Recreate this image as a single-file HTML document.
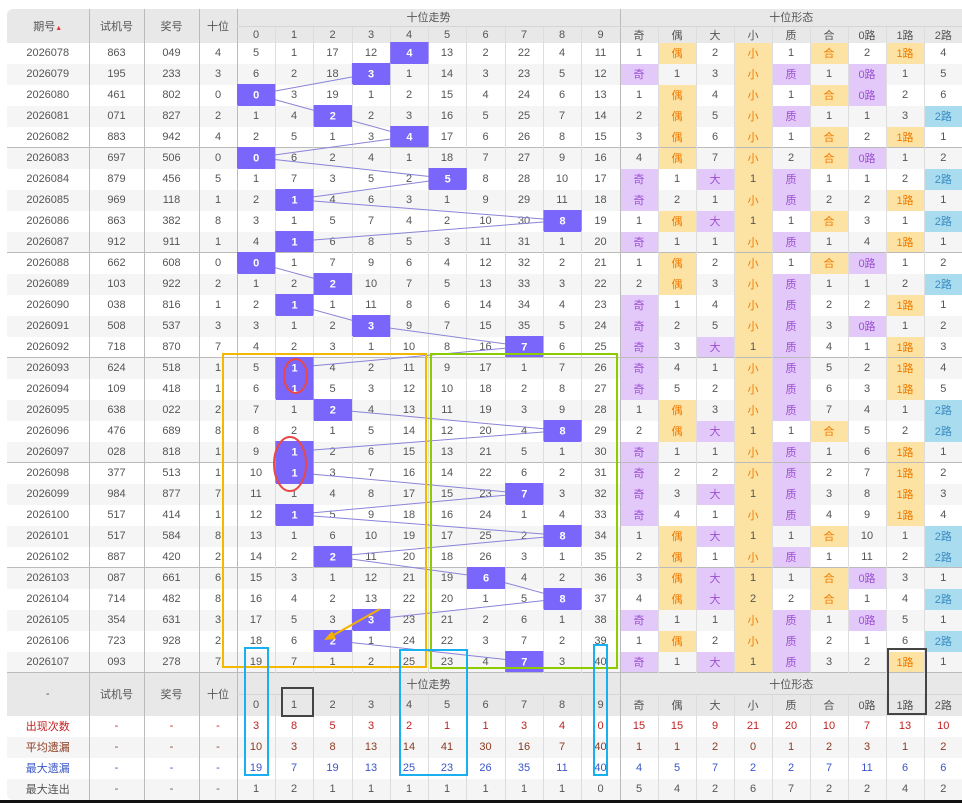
<!DOCTYPE html>
<html><head><meta charset="utf-8"><style>
*{margin:0;padding:0;box-sizing:border-box}
body{width:962px;height:803px;background:#fff;position:relative;overflow:hidden;font-family:"Liberation Sans","Noto Sans CJK SC",sans-serif;font-size:11px;color:#555}
.bar{position:absolute;left:0;top:800px;width:962px;height:3px;background:#111}
table{position:absolute;left:7px;top:9px;width:955px;border-collapse:collapse;table-layout:fixed;background:#fff;border-radius:6px 0 0 6px;overflow:hidden}
td,th{text-align:center;border-left:1px solid #ddd;font-weight:normal;white-space:nowrap;overflow:hidden;padding:0}
th{background:#e8e8e8;color:#555}
tr.d td{height:21px}
tr.g td{background:#f5f5f5}
tr.sep td{box-shadow:inset 0 -1px 0 #bbb}
.L{border-left:1px solid #bbb}
.h{background:#7a66fa!important;color:#fff}
.p{background:#e3c8fa!important;color:#9b50d0}
.y{background:#fde3a3!important;color:#f07a00}
.b{background:#a9dcef!important;color:#3b8cc2}
.ys{background:#fde3a3!important}
.r{color:#c02222}.br{color:#8b3a20}.bl{color:#3a55c8}
tr.s td{height:21px}
</style></head><body>
<table>
<colgroup><col style="width:82px"><col style="width:55px"><col style="width:55px"><col style="width:38px">
<col style="width:38px"><col style="width:38px"><col style="width:39px"><col style="width:38px"><col style="width:38px"><col style="width:38px"><col style="width:39px"><col style="width:38px"><col style="width:38px"><col style="width:39px">
<col style="width:38px"><col style="width:38px"><col style="width:38px"><col style="width:38px"><col style="width:38px"><col style="width:38px"><col style="width:38px"><col style="width:38px"><col style="width:38px"></colgroup>
<tr style="height:17px"><th rowspan="2" style="border-left:none">期号<span style="font-size:7px;color:#e33">▲</span></th><th rowspan="2" class="L">试机号</th><th rowspan="2" class="L">奖号</th><th rowspan="2" class="L">十位</th><th colspan="10" class="L" style="border-bottom:1px solid #d5d5d5">十位走势</th><th colspan="9" class="L" style="border-bottom:1px solid #d5d5d5">十位形态</th></tr>
<tr style="height:16px"><th class="L">0</th><th>1</th><th>2</th><th>3</th><th>4</th><th>5</th><th>6</th><th>7</th><th>8</th><th>9</th><th class="L">奇</th><th>偶</th><th>大</th><th>小</th><th>质</th><th>合</th><th>0路</th><th>1路</th><th>2路</th></tr>
<tr class="d"><td style="border:none">2026078</td><td class="L">863</td><td class="L">049</td><td class="L">4</td><td class="L">5</td><td>1</td><td>17</td><td>12</td><td class="h"></td><td>13</td><td>2</td><td>22</td><td>4</td><td>11</td><td class="L">1</td><td class="y">偶</td><td>2</td><td class="y">小</td><td>1</td><td class="y">合</td><td>2</td><td class="y">1路</td><td>4</td></tr>
<tr class="d g"><td style="border:none">2026079</td><td class="L">195</td><td class="L">233</td><td class="L">3</td><td class="L">6</td><td>2</td><td>18</td><td class="h"></td><td>1</td><td>14</td><td>3</td><td>23</td><td>5</td><td>12</td><td class="L p">奇</td><td>1</td><td>3</td><td class="y">小</td><td class="p">质</td><td>1</td><td class="p">0路</td><td>1</td><td>5</td></tr>
<tr class="d"><td style="border:none">2026080</td><td class="L">461</td><td class="L">802</td><td class="L">0</td><td class="L h"></td><td>3</td><td>19</td><td>1</td><td>2</td><td>15</td><td>4</td><td>24</td><td>6</td><td>13</td><td class="L">1</td><td class="y">偶</td><td>4</td><td class="y">小</td><td>1</td><td class="y">合</td><td class="p">0路</td><td>2</td><td>6</td></tr>
<tr class="d g"><td style="border:none">2026081</td><td class="L">071</td><td class="L">827</td><td class="L">2</td><td class="L">1</td><td>4</td><td class="h"></td><td>2</td><td>3</td><td>16</td><td>5</td><td>25</td><td>7</td><td>14</td><td class="L">2</td><td class="y">偶</td><td>5</td><td class="y">小</td><td class="p">质</td><td>1</td><td>1</td><td>3</td><td class="b">2路</td></tr>
<tr class="d sep"><td style="border-left:none">2026082</td><td class="L">883</td><td class="L">942</td><td class="L">4</td><td class="L">2</td><td>5</td><td>1</td><td>3</td><td class="h"></td><td>17</td><td>6</td><td>26</td><td>8</td><td>15</td><td class="L">3</td><td class="y">偶</td><td>6</td><td class="y">小</td><td>1</td><td class="y">合</td><td>2</td><td class="y">1路</td><td>1</td></tr>
<tr class="d g"><td style="border:none">2026083</td><td class="L">697</td><td class="L">506</td><td class="L">0</td><td class="L h"></td><td>6</td><td>2</td><td>4</td><td>1</td><td>18</td><td>7</td><td>27</td><td>9</td><td>16</td><td class="L">4</td><td class="y">偶</td><td>7</td><td class="y">小</td><td>2</td><td class="y">合</td><td class="p">0路</td><td>1</td><td>2</td></tr>
<tr class="d"><td style="border:none">2026084</td><td class="L">879</td><td class="L">456</td><td class="L">5</td><td class="L">1</td><td>7</td><td>3</td><td>5</td><td>2</td><td class="h"></td><td>8</td><td>28</td><td>10</td><td>17</td><td class="L p">奇</td><td>1</td><td class="p">大</td><td class="ys">1</td><td class="p">质</td><td>1</td><td>1</td><td>2</td><td class="b">2路</td></tr>
<tr class="d g"><td style="border:none">2026085</td><td class="L">969</td><td class="L">118</td><td class="L">1</td><td class="L">2</td><td class="h"></td><td>4</td><td>6</td><td>3</td><td>1</td><td>9</td><td>29</td><td>11</td><td>18</td><td class="L p">奇</td><td>2</td><td>1</td><td class="y">小</td><td class="p">质</td><td>2</td><td>2</td><td class="y">1路</td><td>1</td></tr>
<tr class="d"><td style="border:none">2026086</td><td class="L">863</td><td class="L">382</td><td class="L">8</td><td class="L">3</td><td>1</td><td>5</td><td>7</td><td>4</td><td>2</td><td>10</td><td>30</td><td class="h"></td><td>19</td><td class="L">1</td><td class="y">偶</td><td class="p">大</td><td class="ys">1</td><td>1</td><td class="y">合</td><td>3</td><td>1</td><td class="b">2路</td></tr>
<tr class="d g sep"><td style="border-left:none">2026087</td><td class="L">912</td><td class="L">911</td><td class="L">1</td><td class="L">4</td><td class="h"></td><td>6</td><td>8</td><td>5</td><td>3</td><td>11</td><td>31</td><td>1</td><td>20</td><td class="L p">奇</td><td>1</td><td>1</td><td class="y">小</td><td class="p">质</td><td>1</td><td>4</td><td class="y">1路</td><td>1</td></tr>
<tr class="d"><td style="border:none">2026088</td><td class="L">662</td><td class="L">608</td><td class="L">0</td><td class="L h"></td><td>1</td><td>7</td><td>9</td><td>6</td><td>4</td><td>12</td><td>32</td><td>2</td><td>21</td><td class="L">1</td><td class="y">偶</td><td>2</td><td class="y">小</td><td>1</td><td class="y">合</td><td class="p">0路</td><td>1</td><td>2</td></tr>
<tr class="d g"><td style="border:none">2026089</td><td class="L">103</td><td class="L">922</td><td class="L">2</td><td class="L">1</td><td>2</td><td class="h"></td><td>10</td><td>7</td><td>5</td><td>13</td><td>33</td><td>3</td><td>22</td><td class="L">2</td><td class="y">偶</td><td>3</td><td class="y">小</td><td class="p">质</td><td>1</td><td>1</td><td>2</td><td class="b">2路</td></tr>
<tr class="d"><td style="border:none">2026090</td><td class="L">038</td><td class="L">816</td><td class="L">1</td><td class="L">2</td><td class="h"></td><td>1</td><td>11</td><td>8</td><td>6</td><td>14</td><td>34</td><td>4</td><td>23</td><td class="L p">奇</td><td>1</td><td>4</td><td class="y">小</td><td class="p">质</td><td>2</td><td>2</td><td class="y">1路</td><td>1</td></tr>
<tr class="d g"><td style="border:none">2026091</td><td class="L">508</td><td class="L">537</td><td class="L">3</td><td class="L">3</td><td>1</td><td>2</td><td class="h"></td><td>9</td><td>7</td><td>15</td><td>35</td><td>5</td><td>24</td><td class="L p">奇</td><td>2</td><td>5</td><td class="y">小</td><td class="p">质</td><td>3</td><td class="p">0路</td><td>1</td><td>2</td></tr>
<tr class="d sep"><td style="border-left:none">2026092</td><td class="L">718</td><td class="L">870</td><td class="L">7</td><td class="L">4</td><td>2</td><td>3</td><td>1</td><td>10</td><td>8</td><td>16</td><td class="h"></td><td>6</td><td>25</td><td class="L p">奇</td><td>3</td><td class="p">大</td><td class="ys">1</td><td class="p">质</td><td>4</td><td>1</td><td class="y">1路</td><td>3</td></tr>
<tr class="d g"><td style="border:none">2026093</td><td class="L">624</td><td class="L">518</td><td class="L">1</td><td class="L">5</td><td class="h"></td><td>4</td><td>2</td><td>11</td><td>9</td><td>17</td><td>1</td><td>7</td><td>26</td><td class="L p">奇</td><td>4</td><td>1</td><td class="y">小</td><td class="p">质</td><td>5</td><td>2</td><td class="y">1路</td><td>4</td></tr>
<tr class="d"><td style="border:none">2026094</td><td class="L">109</td><td class="L">418</td><td class="L">1</td><td class="L">6</td><td class="h"></td><td>5</td><td>3</td><td>12</td><td>10</td><td>18</td><td>2</td><td>8</td><td>27</td><td class="L p">奇</td><td>5</td><td>2</td><td class="y">小</td><td class="p">质</td><td>6</td><td>3</td><td class="y">1路</td><td>5</td></tr>
<tr class="d g"><td style="border:none">2026095</td><td class="L">638</td><td class="L">022</td><td class="L">2</td><td class="L">7</td><td>1</td><td class="h"></td><td>4</td><td>13</td><td>11</td><td>19</td><td>3</td><td>9</td><td>28</td><td class="L">1</td><td class="y">偶</td><td>3</td><td class="y">小</td><td class="p">质</td><td>7</td><td>4</td><td>1</td><td class="b">2路</td></tr>
<tr class="d"><td style="border:none">2026096</td><td class="L">476</td><td class="L">689</td><td class="L">8</td><td class="L">8</td><td>2</td><td>1</td><td>5</td><td>14</td><td>12</td><td>20</td><td>4</td><td class="h"></td><td>29</td><td class="L">2</td><td class="y">偶</td><td class="p">大</td><td class="ys">1</td><td>1</td><td class="y">合</td><td>5</td><td>2</td><td class="b">2路</td></tr>
<tr class="d g sep"><td style="border-left:none">2026097</td><td class="L">028</td><td class="L">818</td><td class="L">1</td><td class="L">9</td><td class="h"></td><td>2</td><td>6</td><td>15</td><td>13</td><td>21</td><td>5</td><td>1</td><td>30</td><td class="L p">奇</td><td>1</td><td>1</td><td class="y">小</td><td class="p">质</td><td>1</td><td>6</td><td class="y">1路</td><td>1</td></tr>
<tr class="d"><td style="border:none">2026098</td><td class="L">377</td><td class="L">513</td><td class="L">1</td><td class="L">10</td><td class="h"></td><td>3</td><td>7</td><td>16</td><td>14</td><td>22</td><td>6</td><td>2</td><td>31</td><td class="L p">奇</td><td>2</td><td>2</td><td class="y">小</td><td class="p">质</td><td>2</td><td>7</td><td class="y">1路</td><td>2</td></tr>
<tr class="d g"><td style="border:none">2026099</td><td class="L">984</td><td class="L">877</td><td class="L">7</td><td class="L">11</td><td>1</td><td>4</td><td>8</td><td>17</td><td>15</td><td>23</td><td class="h"></td><td>3</td><td>32</td><td class="L p">奇</td><td>3</td><td class="p">大</td><td class="ys">1</td><td class="p">质</td><td>3</td><td>8</td><td class="y">1路</td><td>3</td></tr>
<tr class="d"><td style="border:none">2026100</td><td class="L">517</td><td class="L">414</td><td class="L">1</td><td class="L">12</td><td class="h"></td><td>5</td><td>9</td><td>18</td><td>16</td><td>24</td><td>1</td><td>4</td><td>33</td><td class="L p">奇</td><td>4</td><td>1</td><td class="y">小</td><td class="p">质</td><td>4</td><td>9</td><td class="y">1路</td><td>4</td></tr>
<tr class="d g"><td style="border:none">2026101</td><td class="L">517</td><td class="L">584</td><td class="L">8</td><td class="L">13</td><td>1</td><td>6</td><td>10</td><td>19</td><td>17</td><td>25</td><td>2</td><td class="h"></td><td>34</td><td class="L">1</td><td class="y">偶</td><td class="p">大</td><td class="ys">1</td><td>1</td><td class="y">合</td><td>10</td><td>1</td><td class="b">2路</td></tr>
<tr class="d sep"><td style="border-left:none">2026102</td><td class="L">887</td><td class="L">420</td><td class="L">2</td><td class="L">14</td><td>2</td><td class="h"></td><td>11</td><td>20</td><td>18</td><td>26</td><td>3</td><td>1</td><td>35</td><td class="L">2</td><td class="y">偶</td><td>1</td><td class="y">小</td><td class="p">质</td><td>1</td><td>11</td><td>2</td><td class="b">2路</td></tr>
<tr class="d g"><td style="border:none">2026103</td><td class="L">087</td><td class="L">661</td><td class="L">6</td><td class="L">15</td><td>3</td><td>1</td><td>12</td><td>21</td><td>19</td><td class="h"></td><td>4</td><td>2</td><td>36</td><td class="L">3</td><td class="y">偶</td><td class="p">大</td><td class="ys">1</td><td>1</td><td class="y">合</td><td class="p">0路</td><td>3</td><td>1</td></tr>
<tr class="d"><td style="border:none">2026104</td><td class="L">714</td><td class="L">482</td><td class="L">8</td><td class="L">16</td><td>4</td><td>2</td><td>13</td><td>22</td><td>20</td><td>1</td><td>5</td><td class="h"></td><td>37</td><td class="L">4</td><td class="y">偶</td><td class="p">大</td><td class="ys">2</td><td>2</td><td class="y">合</td><td>1</td><td>4</td><td class="b">2路</td></tr>
<tr class="d g"><td style="border:none">2026105</td><td class="L">354</td><td class="L">631</td><td class="L">3</td><td class="L">17</td><td>5</td><td>3</td><td class="h"></td><td>23</td><td>21</td><td>2</td><td>6</td><td>1</td><td>38</td><td class="L p">奇</td><td>1</td><td>1</td><td class="y">小</td><td class="p">质</td><td>1</td><td class="p">0路</td><td>5</td><td>1</td></tr>
<tr class="d"><td style="border:none">2026106</td><td class="L">723</td><td class="L">928</td><td class="L">2</td><td class="L">18</td><td>6</td><td class="h"></td><td>1</td><td>24</td><td>22</td><td>3</td><td>7</td><td>2</td><td>39</td><td class="L">1</td><td class="y">偶</td><td>2</td><td class="y">小</td><td class="p">质</td><td>2</td><td>1</td><td>6</td><td class="b">2路</td></tr>
<tr class="d g"><td style="border:none">2026107</td><td class="L">093</td><td class="L">278</td><td class="L">7</td><td class="L">19</td><td>7</td><td>1</td><td>2</td><td>25</td><td>23</td><td>4</td><td class="h"></td><td>3</td><td>40</td><td class="L p">奇</td><td>1</td><td class="p">大</td><td class="ys">1</td><td class="p">质</td><td>3</td><td>2</td><td class="y">1路</td><td>1</td></tr>
<tr style="height:22px"><th rowspan="2" style="border-left:none;border-top:1px solid #bbb">-</th><th rowspan="2" class="L" style="border-top:1px solid #bbb">试机号</th><th rowspan="2" class="L" style="border-top:1px solid #bbb">奖号</th><th rowspan="2" class="L" style="border-top:1px solid #bbb">十位</th><th colspan="10" class="L" style="border-top:1px solid #bbb;border-bottom:1px solid #d5d5d5">十位走势</th><th colspan="9" class="L" style="border-top:1px solid #bbb;border-bottom:1px solid #d5d5d5">十位形态</th></tr>
<tr style="height:21px"><th class="L">0</th><th>1</th><th>2</th><th>3</th><th>4</th><th>5</th><th>6</th><th>7</th><th>8</th><th>9</th><th class="L">奇</th><th>偶</th><th>大</th><th>小</th><th>质</th><th>合</th><th>0路</th><th>1路</th><th>2路</th></tr>
<tr class="s r"><td style="border:none">出现次数</td><td class="L">-</td><td class="L">-</td><td class="L">-</td><td class="L">3</td><td>8</td><td>5</td><td>3</td><td>2</td><td>1</td><td>1</td><td>3</td><td>4</td><td>0</td><td class="L">15</td><td>15</td><td>9</td><td>21</td><td>20</td><td>10</td><td>7</td><td>13</td><td>10</td></tr>
<tr class="s g br"><td style="border:none">平均遗漏</td><td class="L">-</td><td class="L">-</td><td class="L">-</td><td class="L">10</td><td>3</td><td>8</td><td>13</td><td>14</td><td>41</td><td>30</td><td>16</td><td>7</td><td>40</td><td class="L">1</td><td>1</td><td>2</td><td>0</td><td>1</td><td>2</td><td>3</td><td>1</td><td>2</td></tr>
<tr class="s bl"><td style="border:none">最大遗漏</td><td class="L">-</td><td class="L">-</td><td class="L">-</td><td class="L">19</td><td>7</td><td>19</td><td>13</td><td>25</td><td>23</td><td>26</td><td>35</td><td>11</td><td>40</td><td class="L">4</td><td>5</td><td>7</td><td>2</td><td>2</td><td>7</td><td>11</td><td>6</td><td>6</td></tr>
<tr class="s g"><td style="border:none">最大连出</td><td class="L">-</td><td class="L">-</td><td class="L">-</td><td class="L">1</td><td>2</td><td>1</td><td>1</td><td>1</td><td>1</td><td>1</td><td>1</td><td>1</td><td>0</td><td class="L">5</td><td>4</td><td>2</td><td>6</td><td>7</td><td>2</td><td>2</td><td>4</td><td>2</td></tr>
</table>
<div class="bar"></div>
<svg width="962" height="803" style="position:absolute;left:0;top:0" font-family="Liberation Sans, sans-serif" font-size="11">
<polyline fill="none" stroke="#8a84d8" stroke-width="1" points="409.4,52.5 371.1,73.5 256.2,94.5 332.8,115.5 409.4,136.5 256.2,157.5 447.7,178.5 294.5,199.5 562.6,220.5 294.5,241.5 256.2,262.5 332.8,283.5 294.5,304.5 371.1,325.5 524.3,346.5 294.5,367.5 294.5,388.5 332.8,409.5 562.6,430.5 294.5,451.5 294.5,472.5 524.3,493.5 294.5,514.5 562.6,535.5 332.8,556.5 486,577.5 562.6,598.5 371.1,619.5 332.8,640.5 524.3,661.5"/>
<g fill="#7a66fa">
<rect x="390.2" y="42" width="38.3" height="21"/><rect x="351.9" y="63" width="38.3" height="21"/><rect x="237" y="84" width="38.3" height="21"/><rect x="313.6" y="105" width="38.3" height="21"/><rect x="390.2" y="126" width="38.3" height="21"/><rect x="237" y="147" width="38.3" height="21"/><rect x="428.5" y="168" width="38.3" height="21"/><rect x="275.3" y="189" width="38.3" height="21"/><rect x="543.4" y="210" width="38.3" height="21"/><rect x="275.3" y="231" width="38.3" height="21"/><rect x="237" y="252" width="38.3" height="21"/><rect x="313.6" y="273" width="38.3" height="21"/><rect x="275.3" y="294" width="38.3" height="21"/><rect x="351.9" y="315" width="38.3" height="21"/><rect x="505.1" y="336" width="38.3" height="21"/><rect x="275.3" y="357" width="38.3" height="21"/><rect x="275.3" y="378" width="38.3" height="21"/><rect x="313.6" y="399" width="38.3" height="21"/><rect x="543.4" y="420" width="38.3" height="21"/><rect x="275.3" y="441" width="38.3" height="21"/><rect x="275.3" y="462" width="38.3" height="21"/><rect x="505.1" y="483" width="38.3" height="21"/><rect x="275.3" y="504" width="38.3" height="21"/><rect x="543.4" y="525" width="38.3" height="21"/><rect x="313.6" y="546" width="38.3" height="21"/><rect x="466.8" y="567" width="38.3" height="21"/><rect x="543.4" y="588" width="38.3" height="21"/><rect x="351.9" y="609" width="38.3" height="21"/><rect x="313.6" y="630" width="38.3" height="21"/><rect x="505.1" y="651" width="38.3" height="21"/>
</g>
<g fill="#fff" font-weight="bold" text-anchor="middle">
<text x="409.4" y="56.5">4</text><text x="371.1" y="77.5">3</text><text x="256.2" y="98.5">0</text><text x="332.8" y="119.5">2</text><text x="409.4" y="140.5">4</text><text x="256.2" y="161.5">0</text><text x="447.7" y="182.5">5</text><text x="294.5" y="203.5">1</text><text x="562.6" y="224.5">8</text><text x="294.5" y="245.5">1</text><text x="256.2" y="266.5">0</text><text x="332.8" y="287.5">2</text><text x="294.5" y="308.5">1</text><text x="371.1" y="329.5">3</text><text x="524.3" y="350.5">7</text><text x="294.5" y="371.5">1</text><text x="294.5" y="392.5">1</text><text x="332.8" y="413.5">2</text><text x="562.6" y="434.5">8</text><text x="294.5" y="455.5">1</text><text x="294.5" y="476.5">1</text><text x="524.3" y="497.5">7</text><text x="294.5" y="518.5">1</text><text x="562.6" y="539.5">8</text><text x="332.8" y="560.5">2</text><text x="486" y="581.5">6</text><text x="562.6" y="602.5">8</text><text x="371.1" y="623.5">3</text><text x="332.8" y="644.5">2</text><text x="524.3" y="665.5">7</text>
</g>
<g fill="none" stroke-width="2">
<rect x="223" y="354" width="203" height="313" stroke="#f5b800"/>
<rect x="431" y="354" width="186" height="314" stroke="#8ccc00"/>
<rect x="245" y="648" width="23" height="127" stroke="#1ab0f0"/>
<rect x="400" y="650" width="67" height="125" stroke="#1ab0f0"/>
<rect x="594" y="645" width="13" height="130" stroke="#1ab0f0"/>
<rect x="282" y="688" width="31" height="28" stroke="#444"/>
<rect x="888" y="649" width="38" height="65" stroke="#444"/>
<ellipse cx="295.5" cy="376" rx="11.5" ry="17" stroke="#e84848"/>
<ellipse cx="290" cy="464" rx="16" ry="27" stroke="#e84848"/>
<line x1="380" y1="609" x2="330" y2="637" stroke="#f5b000"/>
</g>
<polygon points="324,640 332,631 336,639" fill="#f5b000"/>
</svg>
</body></html>
